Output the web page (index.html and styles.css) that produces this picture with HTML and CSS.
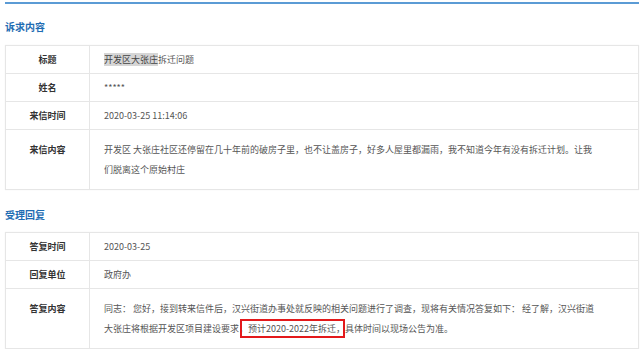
FILE: index.html
```html
<!DOCTYPE html>
<html lang="zh-CN">
<head>
<meta charset="utf-8">
<link rel="stylesheet" href="styles.css">
</head>
<body>
<div class="page">
  <h2 class="section-title first">诉求内容</h2>
  <div class="info-table">
    <div class="row">
      <div class="label">标题</div>
      <div class="value"><span class="hl">开发区大张庄</span>拆迁问题</div>
    </div>
    <div class="row">
      <div class="label">姓名</div>
      <div class="value">*****</div>
    </div>
    <div class="row">
      <div class="label">来信时间</div>
      <div class="value">2020-03-25 11:14:06</div>
    </div>
    <div class="row multi">
      <div class="label">来信内容</div>
      <div class="value">开发区 大张庄社区还停留在几十年前的破房子里，也不让盖房子，好多人屋里都漏雨，我不知道今年有没有拆迁计划。让我们脱离这个原始村庄</div>
    </div>
  </div>

  <h2 class="section-title">受理回复</h2>
  <div class="info-table">
    <div class="row">
      <div class="label">答复时间</div>
      <div class="value">2020-03-25</div>
    </div>
    <div class="row">
      <div class="label">回复单位</div>
      <div class="value">政府办</div>
    </div>
    <div class="row multi">
      <div class="label">答复内容</div>
      <div class="value">同志： 您好，接到转来信件后，汉兴街道办事处就反映的相关问题进行了调查，现将有关情况答复如下： 经了解，汉兴街道大张庄将根据开发区项目建设要求，<span class="mark">预计2020-2022年拆迁，</span>具体时间以现场公告为准。</div>
    </div>
  </div>
</div>
</body>
</html>
```

FILE: styles.css
```css
* { box-sizing: border-box; }
html, body {
  margin: 0;
  padding: 0;
  background: #fff;
}
body {
  font-family: "Noto Sans CJK SC", "Noto Sans", sans-serif;
  color: #555;
}
.page {
  margin: 2px 1px 0 5px;
  border-top: 2px solid #5b9bd5;
}
.section-title {
  margin: 15px 0 7px 0;
  font-size: 10px;
  line-height: 20px;
  font-weight: bold;
  color: #1f6db3;
}
.section-title.first {
  margin-top: 13px;
  margin-bottom: 8px;
}
.info-table {
  border: 1px solid #e6e6e6;
  box-shadow: 0 0 1px rgba(0,0,0,0.08);
}
.row {
  display: grid;
  grid-template-columns: 84px 1fr;
  border-top: 1px solid #e6e6e6;
}
.row:first-child { border-top: none; }
.label, .value {
  font-size: 9px;
  line-height: 20px;
  padding: 4px 0 3px 0;
}
.label {
  text-align: center;
  font-weight: bold;
  color: #333;
  border-right: 1px solid #e6e6e6;
}
.value {
  padding-left: 14px;
  padding-right: 40px;
  color: #555;
}
.row.multi .label,
.row.multi .value {
  padding-top: 10px;
  padding-bottom: 9px;
}
.hl {
  background: #d6d6d6;
  color: #444;
}
.mark {
  position: relative;
}
.mark::after {
  content: "";
  position: absolute;
  left: -8px;
  right: 0;
  top: -3px;
  bottom: -3px;
  border: 2px solid #e3191b;
  pointer-events: none;
}
```
